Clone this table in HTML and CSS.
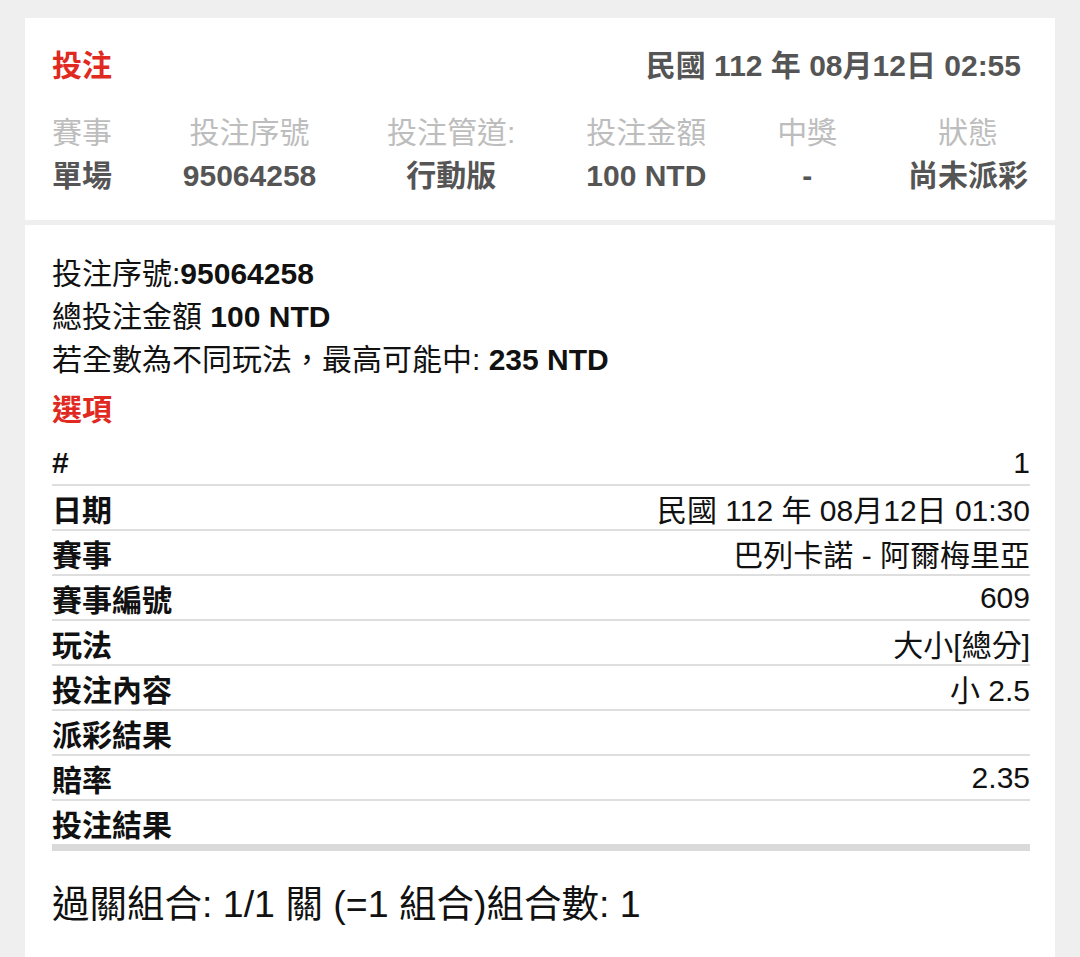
FILE: index.html
```html
<!DOCTYPE html>
<html lang="zh-Hant">
<head>
<meta charset="utf-8">
<title>投注</title>
<link rel="stylesheet" href="styles.css">
</head>
<body>
<div class="page">
  <section class="card summary">
    <div class="summary-top">
      <div class="title">投注</div>
      <div class="date">民國 112 年 08月12日 02:55</div>
    </div>
    <div class="cols">
      <div class="col"><div class="lbl">賽事</div><div class="val">單場</div></div>
      <div class="col"><div class="lbl">投注序號</div><div class="val">95064258</div></div>
      <div class="col"><div class="lbl">投注管道:</div><div class="val">行動版</div></div>
      <div class="col"><div class="lbl">投注金額</div><div class="val">100 NTD</div></div>
      <div class="col"><div class="lbl">中獎</div><div class="val">-</div></div>
      <div class="col"><div class="lbl">狀態</div><div class="val">尚未派彩</div></div>
    </div>
  </section>
  <section class="card detail">
    <div class="line">投注序號:<b>95064258</b></div>
    <div class="line">總投注金額 <b>100 NTD</b></div>
    <div class="line">若全數為不同玩法，最高可能中: <b>235 NTD</b></div>
    <div class="section-title">選項</div>
    <div class="table">
      <div class="row"><span class="k">#</span><span class="v">1</span></div>
      <div class="row"><span class="k">日期</span><span class="v">民國 112 年 08月12日 01:30</span></div>
      <div class="row"><span class="k">賽事</span><span class="v">巴列卡諾 - 阿爾梅里亞</span></div>
      <div class="row"><span class="k">賽事編號</span><span class="v">609</span></div>
      <div class="row"><span class="k">玩法</span><span class="v">大小[總分]</span></div>
      <div class="row"><span class="k">投注內容</span><span class="v">小 2.5</span></div>
      <div class="row"><span class="k">派彩結果</span><span class="v"></span></div>
      <div class="row"><span class="k">賠率</span><span class="v">2.35</span></div>
      <div class="row last"><span class="k">投注結果</span><span class="v"></span></div>
    </div>
    <div class="combo">過關組合: 1/1 關 (=1 組合)組合數: 1</div>
  </section>
</div>
</body>
</html>
```

FILE: styles.css
```css
html, body {
  margin: 0;
  padding: 0;
  background: #efefef;
}
body {
  font-family: "Liberation Sans", "Noto Sans CJK TC", sans-serif;
  color: #111;
  font-size: 30px;
  height: 957px;
  overflow: hidden;
}
.page {
  padding: 18px 25px 0 25px;
  display: flex;
  flex-direction: column;
  gap: 5px;
}
.card {
  background: #fff;
}
.summary {
  padding: 26px 27px 23px 27px;
}
.summary-top {
  display: flex;
  justify-content: space-between;
  align-items: center;
  line-height: 43px;
}
.title {
  color: #e02a1f;
  font-weight: bold;
}
.date {
  color: #555;
  font-weight: bold;
  padding-right: 7px;
}
.cols {
  margin-top: 24px;
  display: flex;
  justify-content: space-between;
  line-height: 43px;
}
.col {
  text-align: center;
}
.lbl {
  color: #bdbdbd;
}
.val {
  color: #555;
  font-weight: bold;
}
.detail {
  padding: 27px 25px 40px 27px;
}
.line {
  line-height: 43px;
}
.line b {
  font-weight: bold;
}
.section-title {
  color: #e02a1f;
  font-weight: bold;
  line-height: 43px;
  margin-top: 7px;
}
.table {
  margin-top: 10px;
}
.row {
  display: flex;
  justify-content: space-between;
  align-items: center;
  height: 43px;
  border-bottom: 2px solid #dedede;
}
.row.last {
  border-bottom: 7px solid #dadada;
}
.k {
  font-weight: bold;
}
.combo {
  margin-top: 27px;
  font-size: 37.5px;
  line-height: 52px;
}
```
